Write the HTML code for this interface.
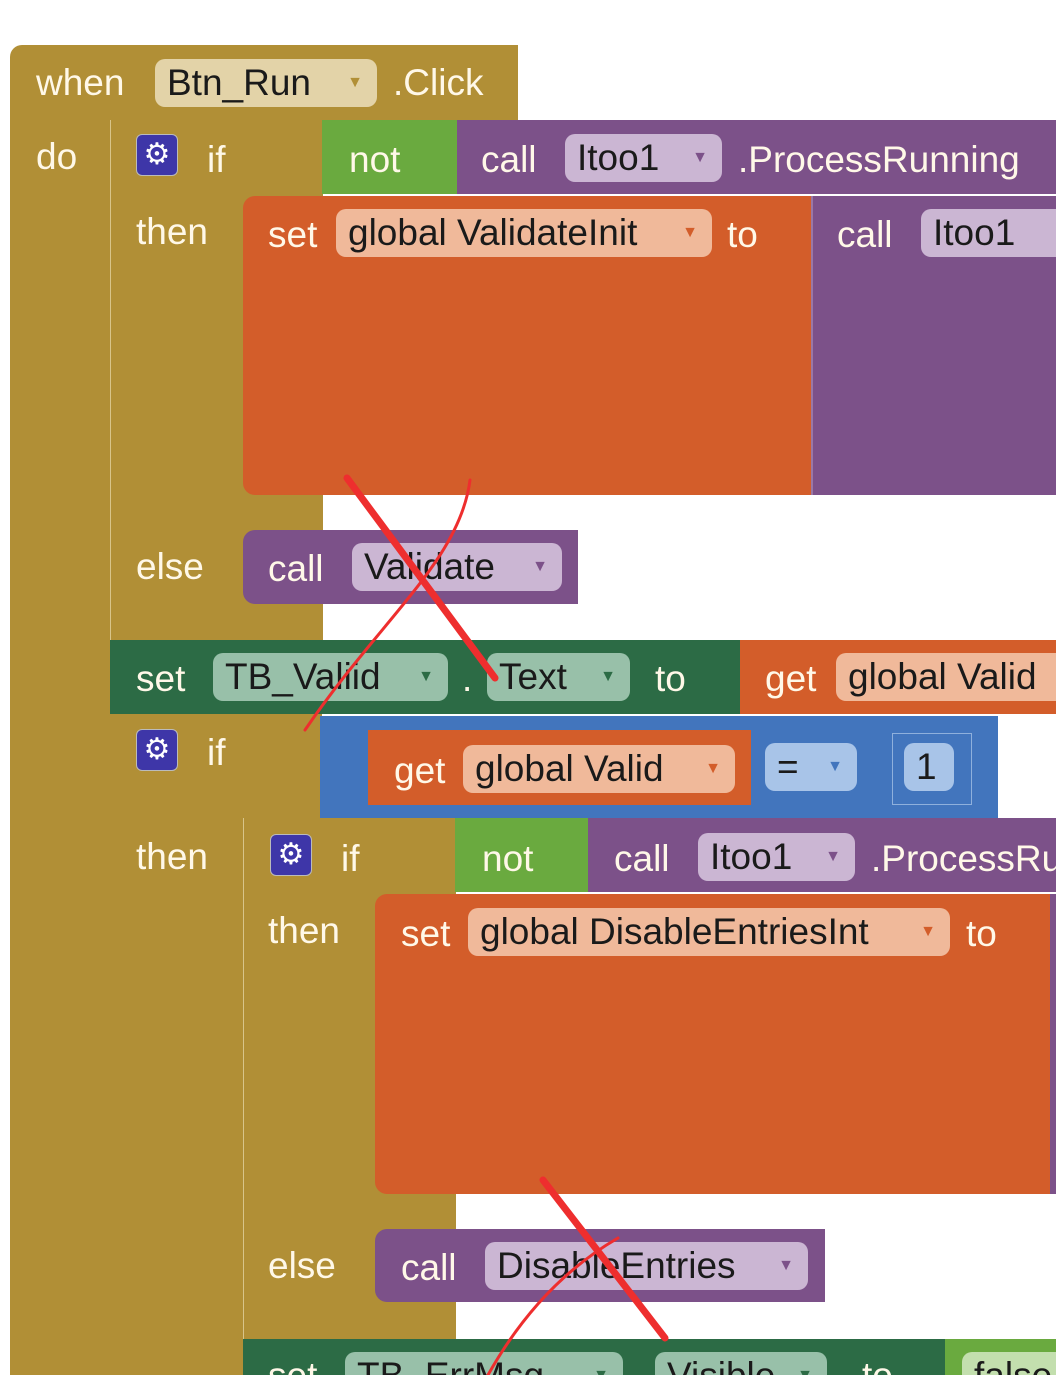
<!DOCTYPE html>
<html style="overflow:hidden"><head><meta charset="utf-8"><style>
html,body{overflow:hidden}
body{margin:0;width:1056px;height:1375px;background:#fff;position:relative;overflow:hidden;font-family:"Liberation Sans",sans-serif}
.b{position:absolute}
.g{background:#b18f36}
.o{background:#d35d2a}
.p{background:#7c5189}
.gr{background:#6aaa3f}
.dg{background:#2c6b45}
.bl{background:#4275bd}
.t{position:absolute;color:#fff8e8;font-size:37px;line-height:1;white-space:nowrap}
.f{position:absolute;height:48px;border-radius:10px;font-size:37px;color:#1a1a1a;line-height:48px;padding-left:12px;box-sizing:border-box;white-space:nowrap;overflow:hidden}
.f i{font-style:normal;font-size:16px;position:absolute;right:14px;top:0}
.fg{background:#e3d3a8}.fg i{color:#b18f36}
.fo{background:#f0b99a}.fo i{color:#d35d2a}
.fp{background:#cbb6d3}.fp i{color:#7c5189}
.fd{background:#98c0a9}.fd i{color:#2c6b45}
.gear{position:absolute;width:40px;height:40px;background:#3e36a8;border-radius:6px;color:#fff;font-size:30px;text-align:center;line-height:40px;border:1px solid #bbb}
</style></head><body>
<div class="b g" style="left:10px;top:45px;width:508px;height:76px;border-radius:12px 0 0 0"></div>
<div class="b g" style="left:10px;top:110px;width:100px;height:1265px"></div>
<div class="t" style="left:36px;top:64px">when</div>
<div class="f fg" style="left:155px;top:59px;width:222px">Btn_Run<i>▼</i></div>
<div class="t" style="left:393px;top:64px">.Click</div>
<div class="t" style="left:36px;top:138px">do</div>

<div class="b g" style="left:110px;top:120px;width:212px;height:520px;border-left:1px solid #d8c48a"></div>
<div class="gear" style="left:136px;top:134px">⚙</div>
<div class="t" style="left:207px;top:141px">if</div>
<div class="b gr" style="left:322px;top:120px;width:135px;height:74px"></div>
<div class="t" style="left:349px;top:141px">not</div>
<div class="b p" style="left:457px;top:120px;width:599px;height:74px"></div>
<div class="t" style="left:481px;top:141px">call</div>
<div class="f fp" style="left:565px;top:134px;width:157px">Itoo1<i>▼</i></div>
<div class="t" style="left:738px;top:141px">.ProcessRunning</div>
<div class="t" style="left:136px;top:213px">then</div>
<div class="b o" style="left:243px;top:196px;width:568px;height:299px;border-radius:12px 0 0 12px"></div>
<div class="t" style="left:268px;top:216px">set</div>
<div class="f fo" style="left:336px;top:209px;width:376px">global ValidateInit<i>▼</i></div>
<div class="t" style="left:727px;top:216px">to</div>
<div class="b p" style="left:811px;top:196px;width:245px;height:299px;border-left:2px solid #9a78a6"></div>
<div class="t" style="left:837px;top:216px">call</div>
<div class="f fp" style="left:921px;top:209px;width:135px;border-radius:10px 0 0 10px">Itoo1</div>
<div class="t" style="left:136px;top:548px">else</div>
<div class="b p" style="left:243px;top:530px;width:335px;height:74px;border-radius:12px 0 0 12px"></div>
<div class="t" style="left:268px;top:550px">call</div>
<div class="f fp" style="left:352px;top:543px;width:210px">Validate<i>▼</i></div>

<div class="b dg" style="left:110px;top:640px;width:630px;height:74px"></div>
<div class="t" style="left:136px;top:660px">set</div>
<div class="f fd" style="left:213px;top:653px;width:235px">TB_Valiid<i>▼</i></div>
<div class="t" style="left:462px;top:660px">.</div>
<div class="f fd" style="left:487px;top:653px;width:143px">Text<i>▼</i></div>
<div class="t" style="left:655px;top:660px">to</div>
<div class="b o" style="left:740px;top:640px;width:316px;height:74px"></div>
<div class="t" style="left:765px;top:660px">get</div>
<div class="f fo" style="left:836px;top:653px;width:220px;border-radius:10px 0 0 10px">global Valid</div>

<div class="b g" style="left:110px;top:714px;width:212px;height:661px"></div>
<div class="gear" style="left:136px;top:729px">⚙</div>
<div class="t" style="left:207px;top:734px">if</div>
<div class="b bl" style="left:320px;top:716px;width:678px;height:102px"></div>
<div class="b o" style="left:368px;top:730px;width:383px;height:75px"></div>
<div class="t" style="left:394px;top:752px">get</div>
<div class="f fo" style="left:463px;top:745px;width:272px">global Valid<i>▼</i></div>
<div class="f" style="left:765px;top:743px;width:92px;background:#a8c4e8">=<i style="color:#4275bd">▼</i></div>
<div class="b" style="left:892px;top:733px;width:80px;height:72px;border:1px solid #8fb0dc;box-sizing:border-box"></div>
<div class="f" style="left:904px;top:743px;width:50px;background:#a8c4e8">1</div>
<div class="t" style="left:136px;top:838px">then</div>

<div class="b g" style="left:243px;top:818px;width:212px;height:522px;border-left:1px solid #d8c48a"></div>
<div class="gear" style="left:270px;top:834px">⚙</div>
<div class="t" style="left:341px;top:840px">if</div>
<div class="b gr" style="left:455px;top:818px;width:133px;height:74px"></div>
<div class="t" style="left:482px;top:840px">not</div>
<div class="b p" style="left:588px;top:818px;width:468px;height:74px;overflow:hidden"><div class="t" style="left:283px;top:22px">.ProcessRunning</div></div>
<div class="t" style="left:614px;top:840px">call</div>
<div class="f fp" style="left:698px;top:833px;width:157px">Itoo1<i>▼</i></div>
<div class="t" style="left:268px;top:912px">then</div>
<div class="b o" style="left:375px;top:894px;width:675px;height:300px;border-radius:12px 0 0 12px"></div>
<div class="b p" style="left:1050px;top:894px;width:6px;height:300px"></div>
<div class="t" style="left:401px;top:915px">set</div>
<div class="f fo" style="left:468px;top:908px;width:482px">global DisableEntriesInt<i>▼</i></div>
<div class="t" style="left:966px;top:915px">to</div>
<div class="t" style="left:268px;top:1247px">else</div>
<div class="b p" style="left:375px;top:1229px;width:450px;height:73px;border-radius:12px 0 0 12px"></div>
<div class="t" style="left:401px;top:1249px">call</div>
<div class="f fp" style="left:485px;top:1242px;width:323px">DisableEntries<i>▼</i></div>

<div class="b dg" style="left:243px;top:1339px;width:702px;height:36px"></div>
<div class="b" style="left:0;top:1339px;width:1056px;height:36px;overflow:hidden">
<div class="t" style="left:268px;top:18px">set</div>
<div class="f fd" style="left:345px;top:13px;width:278px">TB_ErrMsg<i>▼</i></div>
<div class="f fd" style="left:655px;top:13px;width:172px">Visible<i>▼</i></div>
<div class="t" style="left:862px;top:18px">to</div>
<div class="b gr" style="left:945px;top:0;width:111px;height:36px"></div>
<div class="f" style="left:962px;top:13px;width:94px;background:#c3dfae;border-radius:10px 0 0 10px">false</div>
</div>

<svg class="b" style="left:0;top:0" width="1056" height="1375">
<g stroke="#ee2e2e" fill="none" stroke-linecap="round">
<path d="M347 478 L495 678" stroke-width="7"/>
<path d="M305 730 C380 620 460 560 470 480" stroke-width="3"/>
<path d="M543 1180 L665 1338" stroke-width="7"/>
<path d="M488 1375 C530 1300 580 1260 618 1238" stroke-width="3"/>
</g></svg>
</body></html>
